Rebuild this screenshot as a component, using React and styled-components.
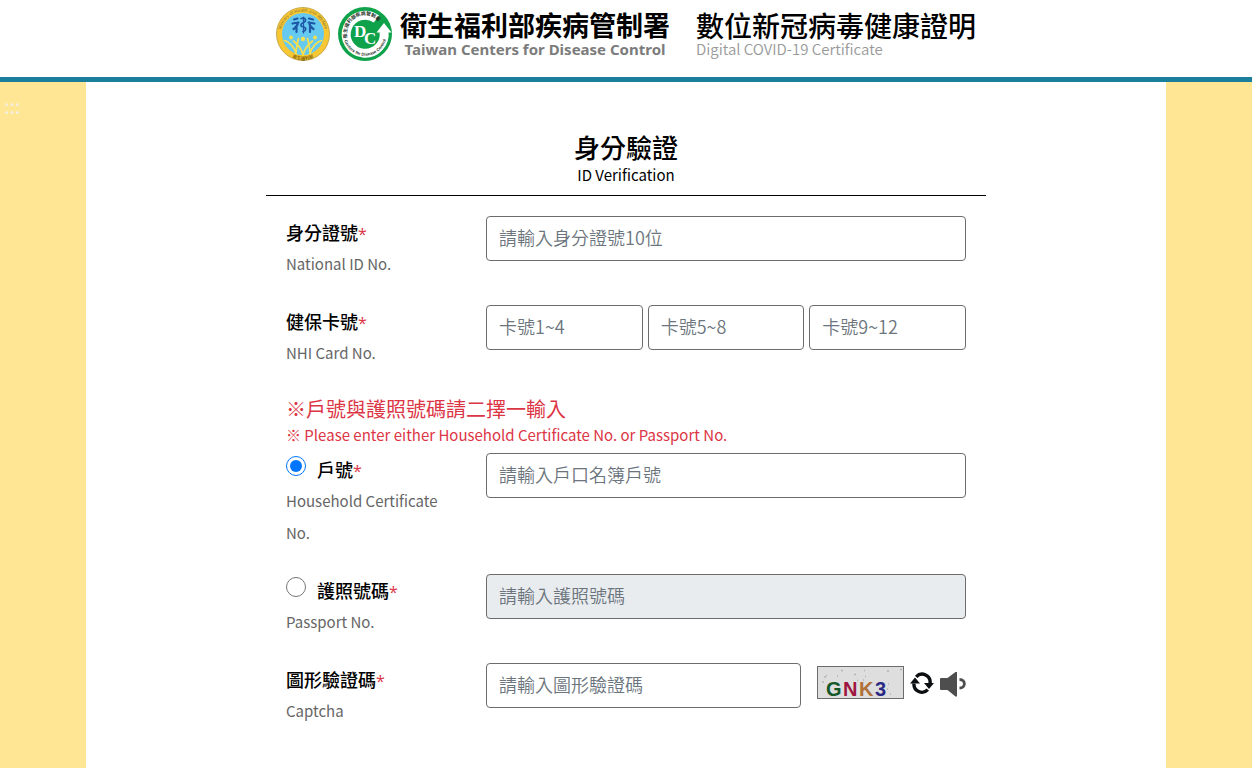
import React, { useState } from 'react';
import styled, { createGlobalStyle } from 'styled-components';

const GlobalStyle = createGlobalStyle`
  * {
    box-sizing: border-box;
  }

  body {
    margin: 0;
    background: #ffe694;
    color: #000;
    font-family: "Noto Sans CJK TC", "Noto Sans", sans-serif;
    font-size: 15px;
  }
`;

const Header = styled.header`
  background: #fff;
  border-bottom: 5px solid #1b7f9b;
`;

const HeaderInner = styled.div`
  display: flex;
  align-items: center;
  max-width: 700px;
  height: 77px;
  margin: 0 auto;
  padding-bottom: 9px;
  white-space: nowrap;
`;

const Brand = styled.a`
  display: flex;
  flex-shrink: 0;
  align-items: center;
  gap: 8px;
  color: inherit;
  text-decoration: none;
`;

const BrandText = styled.span`
  display: flex;
  flex-direction: column;
  align-items: center;
`;

const BrandName = styled.span`
  font-size: 27px;
  font-weight: 700;
  line-height: 30px;
`;

const BrandSub = styled.span`
  color: #7c7c7c;
  font-family: "Noto Sans", sans-serif;
  font-size: 15px;
  font-weight: 700;
  line-height: 18px;
`;

const SiteTitle = styled.h1`
  display: flex;
  flex-direction: column;
  margin: 0 0 0 26px;
  font-size: 28px;
  font-weight: 500;
  line-height: 30px;

  small {
    color: #999;
    font-size: 15px;
    font-weight: 350;
    line-height: 18px;
  }
`;

const Body = styled.div`
  position: relative;
`;

const AccessKey = styled.a`
  position: absolute;
  top: 12px;
  left: 4px;
  color: #f3efe4;
  font-size: 20px;
  line-height: 24px;
  text-decoration: none;
`;

const Panel = styled.main`
  max-width: 1080px;
  min-height: calc(100vh - 82px);
  margin: 0 auto;
  padding: 50px 20px 16px;
  background: #fff;
`;

const Form = styled.form`
  max-width: 720px;
  margin: 0 auto;
`;

const Heading = styled.h2`
  display: flex;
  flex-direction: column;
  margin: 0;
  padding-bottom: 8px;
  border-bottom: 1px solid #000;
  font-size: 26px;
  font-weight: 500;
  line-height: 30px;
  text-align: center;

  small {
    font-size: 15px;
    font-weight: 400;
    line-height: 25px;
  }
`;

const Fields = styled.div`
  padding: 20px 20px 0;
`;

const Row = styled.div`
  display: grid;
  grid-template-columns: 200px 1fr;
  align-items: start;
  margin-bottom: 25px;
`;

const Label = styled.label`
  display: block;
  padding-right: 32px;
  font-size: 18px;
  font-weight: 500;
  line-height: 32px;

  small {
    display: block;
    color: #666;
    font-size: 15px;
    font-weight: 400;
  }
`;

const Star = styled.span`
  color: #dc3545;
  font-family: "Open Sans", sans-serif;
  font-size: 16px;
  font-weight: 400;
  line-height: 1;
`;

const Radio = styled.input`
  width: 20px;
  height: 20px;
  margin: 3px 11px 0 0;
  vertical-align: top;
  accent-color: #0075ff;
`;

const Input = styled.input`
  width: 100%;
  min-width: 0;
  height: 45px;
  padding: 4px 12px 8px;
  border: 1px solid #6c6c6c;
  border-radius: 4px;
  background: #fff;
  color: #495057;
  font-family: inherit;
  font-size: 18px;
  font-weight: 350;

  &::placeholder {
    color: #6c757d;
    opacity: 1;
  }

  &:disabled {
    background: #e9ecef;
  }
`;

const CardInputs = styled.div`
  display: grid;
  grid-template-columns: repeat(3, 1fr);
  gap: 5px;
`;

const Notice = styled.p`
  display: flex;
  flex-direction: column;
  margin: 0 0 8px;
  color: #dc3545;
  font-size: 20px;
  font-weight: 400;
  line-height: 30px;

  small {
    font-size: 15px;
    line-height: 21px;
  }
`;

const CaptchaLine = styled.div`
  display: flex;
  align-items: flex-start;
  gap: 6px;
`;

const CaptchaInput = styled(Input)`
  flex: 1;
  margin-right: 10px;
`;

const CaptchaImage = styled.svg`
  width: 87px;
  height: 33px;
  margin-top: 3px;
`;

const IconButton = styled.button`
  display: flex;
  margin: 8px 0 0;
  padding: 0;
  border: 0;
  background: none;
  cursor: pointer;
`;

const MinistryLogo = () => (
  <svg width="54" height="54" viewBox="0 0 54 54" aria-hidden="true">
    <defs>
      <path id="mohwTop" d="M4.700 27a22.300 22.300 0 0 1 44.600 0" />
      <path id="mohwBottom" d="M8.500 45a25.800 25.800 0 0 0 37 0" />
    </defs>
    <circle cx="27" cy="27" r="26.500" fill="#f8c834" stroke="#b99b3c" strokeWidth="0.800" />
    <circle cx="27" cy="27" r="21" fill="#66c9f0" />
    <text fontSize="4.500" fill="#8a7433" fontFamily="Liberation Sans, sans-serif">
      <textPath href="#mohwTop" startOffset="50%" textAnchor="middle">Ministry of Health and Welfare</textPath>
    </text>
    <text fontSize="4.400" fontWeight="700" fill="#8b6a10" fontFamily="Noto Sans CJK TC, sans-serif">
      <textPath href="#mohwBottom" startOffset="50%" textAnchor="middle">衛生福利部</textPath>
    </text>
    <g fill="none" stroke="#1d57a5" strokeWidth="2.200" strokeLinecap="round" strokeLinejoin="round">
      <path d="M27.500 10v16" strokeWidth="1.200" />
      <path d="M25 11.500c5-1.500 6 2.500 2.500 4s-3.500 3.500 0 4.500 2.500 3.500-0.500 4.500" strokeWidth="1.700" />
      <path d="M18 12.500l3.500-1M16.500 16.500l6-1M22 15.500c-0.500 4-2.500 5-4.500 6.500M20.500 20v5" />
      <path d="M33 11.500l4 1M32.500 15.500l6 1M33.500 15.500c-0.500 4 2 5 4 6.500M34 20v5" />
    </g>
    <g fill="none" stroke="#f7e04e" strokeWidth="1.700" strokeLinecap="round">
      <path d="M8.500 33.500c4 1 10 6 11.500 13.500M22.500 31.500c-1 5-2.500 9-2.500 15.500" />
      <path d="M45.500 33.500c-4 1-10 6-11.500 13.500M31.500 31.500c1 5 2.500 9 2.500 15.500" />
      <path d="M17.500 34c4 3 8 8 9.500 14M36.500 34c-4 3-8 8-9.500 14" />
    </g>
    <g fill="#f7e04e">
      <circle cx="15" cy="30.500" r="2" />
      <circle cx="27" cy="32" r="2.200" />
      <circle cx="39" cy="30.500" r="2" />
    </g>
  </svg>
);

const CdcLogo = () => (
  <svg width="54" height="54" viewBox="0 0 54 54" aria-hidden="true">
    <defs>
      <path id="cdcTop" d="M9.500 31a18 18 0 0 1 31-16.500" />
      <path id="cdcBottom" d="M5.800 32a21.800 21.800 0 0 0 42.600-1" />
    </defs>
    <circle cx="27" cy="27" r="27" fill="#0ea24a" />
    <path d="M38.500 12A19 19 0 1 0 46 24.500" fill="none" stroke="#fff" strokeWidth="9" />
    <path d="M38.500 25.500L46 16l7.500 9.500z" fill="#fff" />
    <text fontSize="4.800" fontWeight="700" fill="#26352b" fontFamily="Noto Sans CJK TC, sans-serif">
      <textPath href="#cdcTop" startOffset="50%" textAnchor="middle">衛生福利部疾病管制署</textPath>
    </text>
    <text fontSize="4.200" fontWeight="700" fill="#26352b" fontFamily="Liberation Sans, sans-serif">
      <textPath href="#cdcBottom" startOffset="50%" textAnchor="middle">Centers for Disease Control</textPath>
    </text>
    <text x="16" y="30" fontSize="17" fontWeight="700" fill="#fff" fontFamily="Liberation Serif, serif">D</text>
    <text
      x="26"
      y="37"
      fontSize="17"
      fontWeight="700"
      fill="#fff"
      stroke="#0ea24a"
      strokeWidth="1.500"
      paintOrder="stroke"
      fontFamily="Liberation Serif, serif"
    >
      C
    </text>
  </svg>
);

const RefreshIcon = () => (
  <svg width="24" height="24" viewBox="0 0 24 24" aria-hidden="true">
    <g fill="none" stroke="#0b0f12" strokeWidth="3.400">
      <path d="M6.200 5.800A8 8 0 0 1 20 12.500" />
      <path d="M17.800 18.700A8 8 0 0 1 4 12.500" />
    </g>
    <path d="M0 12.500L5 6.500L10 12.500zM14 12L19 18L24 12z" fill="#0b0f12" />
  </svg>
);

const SpeakerIcon = () => (
  <svg width="26" height="26" viewBox="0 0 26 26" aria-hidden="true">
    <path d="M1 7h6.500L15.500 1h1.500v24.500h-1.500L7.500 19H1q-1 0-1-1V8q0-1 1-1z" fill="#4e4e4e" />
    <path d="M19.500 8.500c6.500 0 6.500 8.500 0 8.500" fill="none" stroke="#4e4e4e" strokeWidth="2.800" />
  </svg>
);

const CaptchaCode = () => (
  <CaptchaImage viewBox="0 0 87 33" role="img" aria-label="GNK3">
    <rect x="0.500" y="0.500" width="86" height="32" fill="#dedede" stroke="#6c6c6c" />
    <path
      d="M7 11h2M9 9.500h1M5 16h2M20 10h1M24 4.500h2M37 8.500h2M47 4.500h1M48 10.500h1M46 14h1M70 5h2M71 18h1M70 23h1M83 3.500h2M40 14.500h1M73 28h1"
      stroke="#b4b4b4"
      strokeWidth="1.500"
    />
    <g fontFamily="Liberation Sans, sans-serif" fontSize="20" fontWeight="700">
      <text x="9" y="30" fill="#14582a">G</text>
      <text x="26" y="30" fill="#a01440">N</text>
      <text x="42" y="30" fill="#b0713a">K</text>
      <text x="58" y="30" fill="#2a2a86">3</text>
    </g>
  </CaptchaImage>
);

const App = () => {
  const [idType, setIdType] = useState('household');

  return (
    <>
      <GlobalStyle />
      <Header>
        <HeaderInner>
          <Brand href="#">
            <MinistryLogo />
            <CdcLogo />
            <BrandText>
              <BrandName>衛生福利部疾病管制署</BrandName>
              <BrandSub>Taiwan Centers for Disease Control</BrandSub>
            </BrandText>
          </Brand>
          <SiteTitle>
            數位新冠病毒健康證明
            <small>Digital COVID-19 Certificate</small>
          </SiteTitle>
        </HeaderInner>
      </Header>
      <Body>
        <AccessKey href="#content">:::</AccessKey>
        <Panel id="content">
          <Form onSubmit={(e) => e.preventDefault()}>
            <Heading>
              身分驗證
              <small>ID Verification</small>
            </Heading>
            <Fields>
              <Row>
                <Label htmlFor="nationalId">
                  身分證號<Star>*</Star>
                  <small>National ID No.</small>
                </Label>
                <Input id="nationalId" placeholder="請輸入身分證號10位" />
              </Row>
              <Row>
                <Label htmlFor="card1">
                  健保卡號<Star>*</Star>
                  <small>NHI Card No.</small>
                </Label>
                <CardInputs>
                  <Input id="card1" placeholder="卡號1~4" />
                  <Input id="card2" aria-label="卡號5~8" placeholder="卡號5~8" />
                  <Input id="card3" aria-label="卡號9~12" placeholder="卡號9~12" />
                </CardInputs>
              </Row>
              <Notice>
                ※戶號與護照號碼請二擇一輸入
                <small>※ Please enter either Household Certificate No. or Passport No.</small>
              </Notice>
              <Row>
                <Label>
                  <Radio
                    type="radio"
                    name="idType"
                    checked={idType === 'household'}
                    onChange={() => setIdType('household')}
                  />
                  戶號<Star>*</Star>
                  <small>Household Certificate No.</small>
                </Label>
                <Input
                  aria-label="戶號"
                  placeholder="請輸入戶口名簿戶號"
                  disabled={idType !== 'household'}
                />
              </Row>
              <Row>
                <Label>
                  <Radio
                    type="radio"
                    name="idType"
                    checked={idType === 'passport'}
                    onChange={() => setIdType('passport')}
                  />
                  護照號碼<Star>*</Star>
                  <small>Passport No.</small>
                </Label>
                <Input
                  aria-label="護照號碼"
                  placeholder="請輸入護照號碼"
                  disabled={idType !== 'passport'}
                />
              </Row>
              <Row>
                <Label htmlFor="captcha">
                  圖形驗證碼<Star>*</Star>
                  <small>Captcha</small>
                </Label>
                <CaptchaLine>
                  <CaptchaInput id="captcha" placeholder="請輸入圖形驗證碼" />
                  <CaptchaCode />
                  <IconButton type="button" aria-label="Refresh">
                    <RefreshIcon />
                  </IconButton>
                  <IconButton type="button" aria-label="Play audio">
                    <SpeakerIcon />
                  </IconButton>
                </CaptchaLine>
              </Row>
            </Fields>
          </Form>
        </Panel>
      </Body>
    </>
  );
};

export default App;
